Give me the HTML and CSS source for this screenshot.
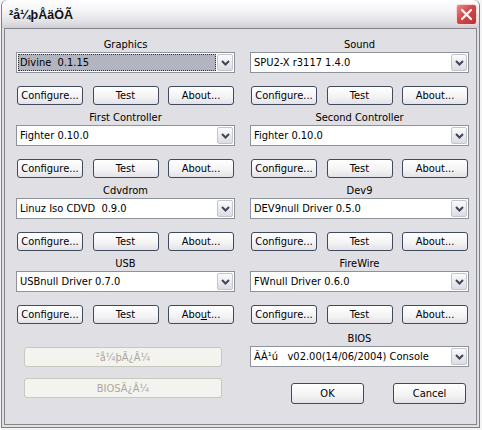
FILE: index.html
```html
<!DOCTYPE html>
<html>
<head>
<meta charset="utf-8">
<link rel="stylesheet" href="styles.css">
</head>
<body>
<div class="window">
  <div class="titlebar">
    <span class="title">²å¼þÅäÖÃ</span>
    <span class="close"><svg width="13" height="13" viewBox="0 0 13 13"><path d="M2 2 L11 11 M11 2 L2 11" stroke="#fff" stroke-width="2.2" stroke-linecap="round"/></svg></span>
  </div>
  <div class="client">
    <div class="grid">
      <section class="plugin">
        <div class="label">Graphics</div>
        <div class="combo"><span class="value"><span class="sel">Divine  0.1.15</span></span><span class="arrow"><svg width="9" height="6" viewBox="0 0 9 6"><path d="M1 1 L4.5 4.5 L8 1" fill="none" stroke="#43435a" stroke-width="2"/></svg></span></div>
        <div class="btns"><button class="btn">Configure...</button><button class="btn">Test</button><button class="btn">About...</button></div>
      </section>
      <section class="plugin">
        <div class="label">Sound</div>
        <div class="combo"><span class="value">SPU2-X r3117 1.4.0</span><span class="arrow"><svg width="9" height="6" viewBox="0 0 9 6"><path d="M1 1 L4.5 4.5 L8 1" fill="none" stroke="#43435a" stroke-width="2"/></svg></span></div>
        <div class="btns"><button class="btn">Configure...</button><button class="btn">Test</button><button class="btn">About...</button></div>
      </section>
      <section class="plugin">
        <div class="label">First Controller</div>
        <div class="combo"><span class="value">Fighter 0.10.0</span><span class="arrow"><svg width="9" height="6" viewBox="0 0 9 6"><path d="M1 1 L4.5 4.5 L8 1" fill="none" stroke="#43435a" stroke-width="2"/></svg></span></div>
        <div class="btns"><button class="btn">Configure...</button><button class="btn">Test</button><button class="btn">About...</button></div>
      </section>
      <section class="plugin">
        <div class="label">Second Controller</div>
        <div class="combo"><span class="value">Fighter 0.10.0</span><span class="arrow"><svg width="9" height="6" viewBox="0 0 9 6"><path d="M1 1 L4.5 4.5 L8 1" fill="none" stroke="#43435a" stroke-width="2"/></svg></span></div>
        <div class="btns"><button class="btn">Configure...</button><button class="btn">Test</button><button class="btn">About...</button></div>
      </section>
      <section class="plugin">
        <div class="label">Cdvdrom</div>
        <div class="combo"><span class="value">Linuz Iso CDVD  0.9.0</span><span class="arrow"><svg width="9" height="6" viewBox="0 0 9 6"><path d="M1 1 L4.5 4.5 L8 1" fill="none" stroke="#43435a" stroke-width="2"/></svg></span></div>
        <div class="btns"><button class="btn">Configure...</button><button class="btn">Test</button><button class="btn">About...</button></div>
      </section>
      <section class="plugin">
        <div class="label">Dev9</div>
        <div class="combo"><span class="value">DEV9null Driver 0.5.0</span><span class="arrow"><svg width="9" height="6" viewBox="0 0 9 6"><path d="M1 1 L4.5 4.5 L8 1" fill="none" stroke="#43435a" stroke-width="2"/></svg></span></div>
        <div class="btns"><button class="btn">Configure...</button><button class="btn">Test</button><button class="btn">About...</button></div>
      </section>
      <section class="plugin">
        <div class="label">USB</div>
        <div class="combo"><span class="value">USBnull Driver 0.7.0</span><span class="arrow"><svg width="9" height="6" viewBox="0 0 9 6"><path d="M1 1 L4.5 4.5 L8 1" fill="none" stroke="#43435a" stroke-width="2"/></svg></span></div>
        <div class="btns"><button class="btn">Configure...</button><button class="btn">Test</button><button class="btn">Abo<u>u</u>t...</button></div>
      </section>
      <section class="plugin">
        <div class="label">FireWire</div>
        <div class="combo"><span class="value">FWnull Driver 0.6.0</span><span class="arrow"><svg width="9" height="6" viewBox="0 0 9 6"><path d="M1 1 L4.5 4.5 L8 1" fill="none" stroke="#43435a" stroke-width="2"/></svg></span></div>
        <div class="btns"><button class="btn">Configure...</button><button class="btn">Test</button><button class="btn">About...</button></div>
      </section>
    </div>
    <div class="bottom">
      <div class="dirs">
        <button class="btn disabled">²å¼þÄ¿Â¼</button>
        <button class="btn disabled">BIOSÄ¿Â¼</button>
      </div>
      <div class="bios">
        <div class="label">BIOS</div>
        <div class="combo"><span class="value">ÃÀ¹ú   v02.00(14/06/2004) Console</span><span class="arrow"><svg width="9" height="6" viewBox="0 0 9 6"><path d="M1 1 L4.5 4.5 L8 1" fill="none" stroke="#43435a" stroke-width="2"/></svg></span></div>
        <div class="actions"><button class="btn big">OK</button><button class="btn big">Cancel</button></div>
      </div>
    </div>
  </div>
</div>
</body>
</html>
```
FILE: styles.css
```css
html, body {
  margin: 0;
  padding: 0;
  background: #f4f4f4;
}
body {
  font-family: "DejaVu Sans Condensed", "Liberation Sans", sans-serif;
  font-stretch: condensed;
  font-size: 11px;
  color: #000;
}
.window {
  box-sizing: border-box;
  width: 479px;
  height: 428px;
  margin-left: 1px;
  border: 1px solid #7f7f86;
  border-top: none;
  border-radius: 6px 6px 0 0;
  background: #e0dfe3;
  padding: 0 2px 2px 2px;
  display: flex;
  flex-direction: column;
}
.titlebar {
  height: 28px;
  margin: 0 -2px;
  border-radius: 6px 6px 0 0;
  background: linear-gradient(#fefefe 0%, #f6f6f8 35%, #e6e6ea 70%, #cfcfd6 100%);
  display: flex;
  align-items: center;
  justify-content: space-between;
  padding: 0 2px 0 7px;
  flex: none;
}
.title {
  font-family: "Liberation Sans", sans-serif;
  font-stretch: normal;
  font-weight: bold;
  font-size: 12.5px;
  color: #111;
  margin-top: 1px;
}
.close {
  width: 21px;
  height: 21px;
  box-sizing: border-box;
  border: 1px solid #f4d7d4;
  border-radius: 3px;
  background: linear-gradient(135deg, #e9898a 0%, #d0494b 45%, #b73436 100%);
  display: flex;
  align-items: center;
  justify-content: center;
  margin-top: 1px;
}
.client {
  flex: 1;
  border: 1px solid #85858c;
  padding: 9px 4px 0 11px;
}
.grid {
  display: grid;
  grid-template-columns: 219px 219px;
  column-gap: 15px;
  row-gap: 6px;
}
.plugin, .bios {
  display: flex;
  flex-direction: column;
}
.label {
  height: 13px;
  line-height: 13px;
  text-align: center;
}
.combo {
  margin-top: 1px;
  height: 21px;
  box-sizing: border-box;
  border: 1px solid #8e939b;
  background: #fff;
  display: flex;
  align-items: stretch;
}
.value {
  flex: 1;
  display: flex;
  align-items: center;
  padding: 1px 1px 1px 1px;
  white-space: pre;
  overflow: hidden;
}
.value:not(:has(.sel)) {
  padding-left: 3px;
}
.sel {
  flex: 1;
  align-self: stretch;
  display: flex;
  align-items: center;
  background: #b2b4bf;
  outline: 1px dotted #333;
  outline-offset: -1px;
  padding-left: 2px;
}
.arrow {
  width: 16px;
  margin: 1px 1px 1px 0;
  box-sizing: border-box;
  border: 1px solid #c3c5cc;
  border-radius: 2px;
  background: linear-gradient(#fbfbfc, #dcdde3);
  display: flex;
  align-items: center;
  justify-content: center;
}
.btns {
  margin-top: 13px;
  display: flex;
  justify-content: space-between;
  padding: 0 1px;
}
.btn {
  font: inherit;
  color: #000;
  width: 66px;
  height: 19px;
  padding: 0;
  box-sizing: border-box;
  border: 1px solid #3f4a5c;
  border-radius: 3px;
  background: linear-gradient(#ffffff 0%, #f3f3f5 60%, #e2e2e8 100%);
  line-height: 15px;
  white-space: pre;
}
.bottom {
  display: grid;
  grid-template-columns: 219px 219px;
  column-gap: 15px;
  margin-top: 8px;
}
.dirs {
  display: flex;
  flex-direction: column;
  gap: 11px;
  padding: 15px 0 0 8px;
}
.btn.disabled {
  width: 198px;
  height: 20px;
  border-color: #c9c8bd;
  background: #f3f3ef;
  color: #aca899;
}
.actions {
  margin-top: 16px;
  display: flex;
  justify-content: flex-end;
  gap: 29px;
  padding-right: 3px;
}
.btn.big {
  width: 73px;
  height: 21px;
}
```
